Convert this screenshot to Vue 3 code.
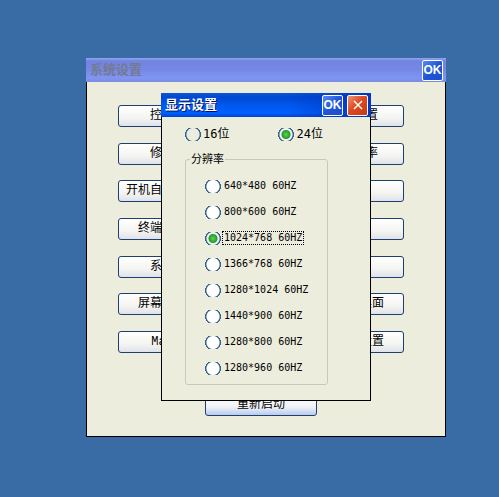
<script setup>
import { ref } from 'vue'

const settingRows = [
  ['控制面板', '局域网设置'],
  ['修改密码', '显示分辨率'],
  ['开机自动运行程序', '时间'],
  ['终端名称设置', '声音'],
  ['系统升级', '打印机'],
  ['屏幕保护设置', '恢复默认桌面'],
  ['Mac地址', '恢复出厂设置'],
]

const depths = ['16', '24']
const depth = ref('24')

const modes = [
  '640*480 60HZ',
  '800*600 60HZ',
  '1024*768 60HZ',
  '1366*768 60HZ',
  '1280*1024 60HZ',
  '1440*900 60HZ',
  '1280*800 60HZ',
  '1280*960 60HZ',
]
const mode = ref('1024*768 60HZ')
</script>

<template>
  <main class="desktop">
    <section class="window system" aria-label="系统设置">
      <header class="titlebar inactive">
        <h1>系统设置</h1>
        <button type="button" class="cap">OK</button>
      </header>
      <div class="system-body">
        <div class="rows">
          <div v-for="(row, i) in settingRows" :key="i" class="row">
            <button v-for="label in row" :key="label" type="button" class="push">{{ label }}</button>
          </div>
        </div>
        <button type="button" class="push restart">重新启动</button>
      </div>
    </section>

    <section class="window display" role="dialog" aria-label="显示设置">
      <header class="titlebar">
        <h2>显示设置</h2>
        <button type="button" class="cap">OK</button>
        <button type="button" class="cap close" aria-label="关闭">
          <svg viewBox="0 0 18 18" width="18" height="18" aria-hidden="true">
            <path d="M5 5L13 13M13 5L5 13" stroke="#fff" stroke-width="1.5" fill="none" />
          </svg>
        </button>
      </header>
      <div class="display-body">
        <div class="depths">
          <label v-for="d in depths" :key="d" class="option depth">
            <input v-model="depth" type="radio" name="depth" :value="d" />
            <span>{{ d }}位</span>
          </label>
        </div>
        <fieldset class="modes">
          <legend>分辨率</legend>
          <label v-for="m in modes" :key="m" class="option mode">
            <input v-model="mode" type="radio" name="mode" :value="m" />
            <span :class="{ focused: m === mode }">{{ m }}</span>
          </label>
        </fieldset>
      </div>
    </section>
  </main>
</template>

<style>
body {
  margin: 0;
  background: #396ba5;
}
</style>

<style scoped>
.desktop {
  position: relative;
  min-height: 100vh;
  overflow: hidden;
  background: #396ba5;
  color: #000;
  font: 12px/16px "Liberation Sans", "Noto Sans CJK SC", sans-serif;
}

.window {
  position: absolute;
  box-sizing: border-box;
  display: flex;
  flex-direction: column;
  background: #ededde;
}

.system {
  left: 86px;
  top: 58px;
  width: 360px;
  height: 379px;
}

.display {
  left: 161px;
  top: 93px;
  width: 210px;
  height: 308px;
}

.titlebar {
  display: flex;
  flex: none;
  align-items: center;
  gap: 4px;
  box-sizing: border-box;
  height: 24px;
  padding: 0 3px 0 4px;
  background:
    linear-gradient(90deg, #0038c000 60%, #0038c0 100%),
    linear-gradient(#0a58dc 0, #0048d0 4px, #0058ee 12px, #0060ff 20px, #0044cc 24px);
}

.titlebar h1,
.titlebar h2 {
  flex: 1;
  margin: 0;
  font-size: 13px;
  line-height: 20px;
  font-weight: bold;
  color: #fff;
  text-shadow: 1px 1px 0 #001060;
}

.titlebar.inactive {
  background: linear-gradient(#93a5f0 0, #7184df 3px, #7688e4 12px, #7f96f4 20px, #7b8cdf 24px);
}

.titlebar.inactive h1 {
  color: #747a90;
  text-shadow: none;
}

.cap {
  display: flex;
  align-items: center;
  justify-content: center;
  box-sizing: border-box;
  width: 21px;
  height: 21px;
  padding: 0;
  border: 1px solid #fff;
  border-radius: 2px;
  background: linear-gradient(135deg, #5b8cf0, #2055d8 50%, #1c4fcc);
  color: #fff;
  font: bold 12px/16px "Liberation Sans", sans-serif;
}

.close {
  background: linear-gradient(135deg, #ee9678, #dd4a22 45%, #c43a14);
}

.system-body {
  display: flex;
  flex: 1;
  flex-direction: column;
  align-items: center;
  justify-content: space-between;
  padding: 23px 41px 20px 31px;
  border: solid #000;
  border-width: 0 1px 1px;
}

.rows {
  display: flex;
  flex-direction: column;
  align-self: stretch;
  justify-content: space-between;
  height: 248px;
}

.row {
  display: flex;
  justify-content: space-between;
}

.push {
  box-sizing: border-box;
  width: 112px;
  height: 22px;
  padding: 0;
  border: 1px solid #1f3f70;
  border-radius: 3px;
  background: linear-gradient(#fff, #f4f4f1 60%, #dfe2ea);
  color: #000;
  font: 12px/16px "Liberation Mono", "Noto Sans CJK SC", monospace;
  white-space: nowrap;
}

.restart {
  background: linear-gradient(#fff, #f0f2f6 60%, #b9cbee);
}

.display-body {
  display: flex;
  flex: 1;
  flex-direction: column;
  gap: 8px;
  padding: 8px 42px 15px 23px;
  border: solid #000;
  border-width: 0 1px 1px;
}

.depths {
  display: flex;
  gap: 49px;
}

.option {
  display: flex;
  align-items: center;
  white-space: nowrap;
}

.depth {
  gap: 2px;
  font: 12px/18px "DejaVu Sans Mono", "Noto Sans CJK SC", monospace;
}

.option input {
  flex: none;
  appearance: none;
  width: 16px;
  height: 13px;
  margin: 0;
  background: radial-gradient(circle 8px, #fff 0, #fff 76%, #35618d 88%, #35618d 98%, #35618d00 100%);
}

.depth input {
  background: radial-gradient(circle 8px, #ededde 0, #ededde 76%, #35618d 88%, #35618d 98%, #35618d00 100%);
}

.option input:checked {
  background:
    radial-gradient(circle 5px, #5fd35a 0, #2fae2f 60%, #28962a 80%, #28962a00 100%),
    radial-gradient(circle 8px, #fff 0, #eef1ee 76%, #35618d 88%, #35618d 98%, #35618d00 100%);
}

.modes {
  flex: 1;
  display: flex;
  flex-direction: column;
  min-width: 0;
  margin: 0;
  padding: 6px 0 0 19px;
  border: 1px solid #c9c9b8;
  border-radius: 3px;
}

.modes legend {
  margin-left: -15px;
  padding: 0 1px;
  font-size: 11px;
  line-height: 16px;
}

.mode {
  gap: 2px;
  height: 26px;
  font: 10px/12px "DejaVu Sans Mono", monospace;
}

.mode span {
  padding: 0 1px;
}

.mode .focused {
  outline: 1px dotted #000;
}
</style>
